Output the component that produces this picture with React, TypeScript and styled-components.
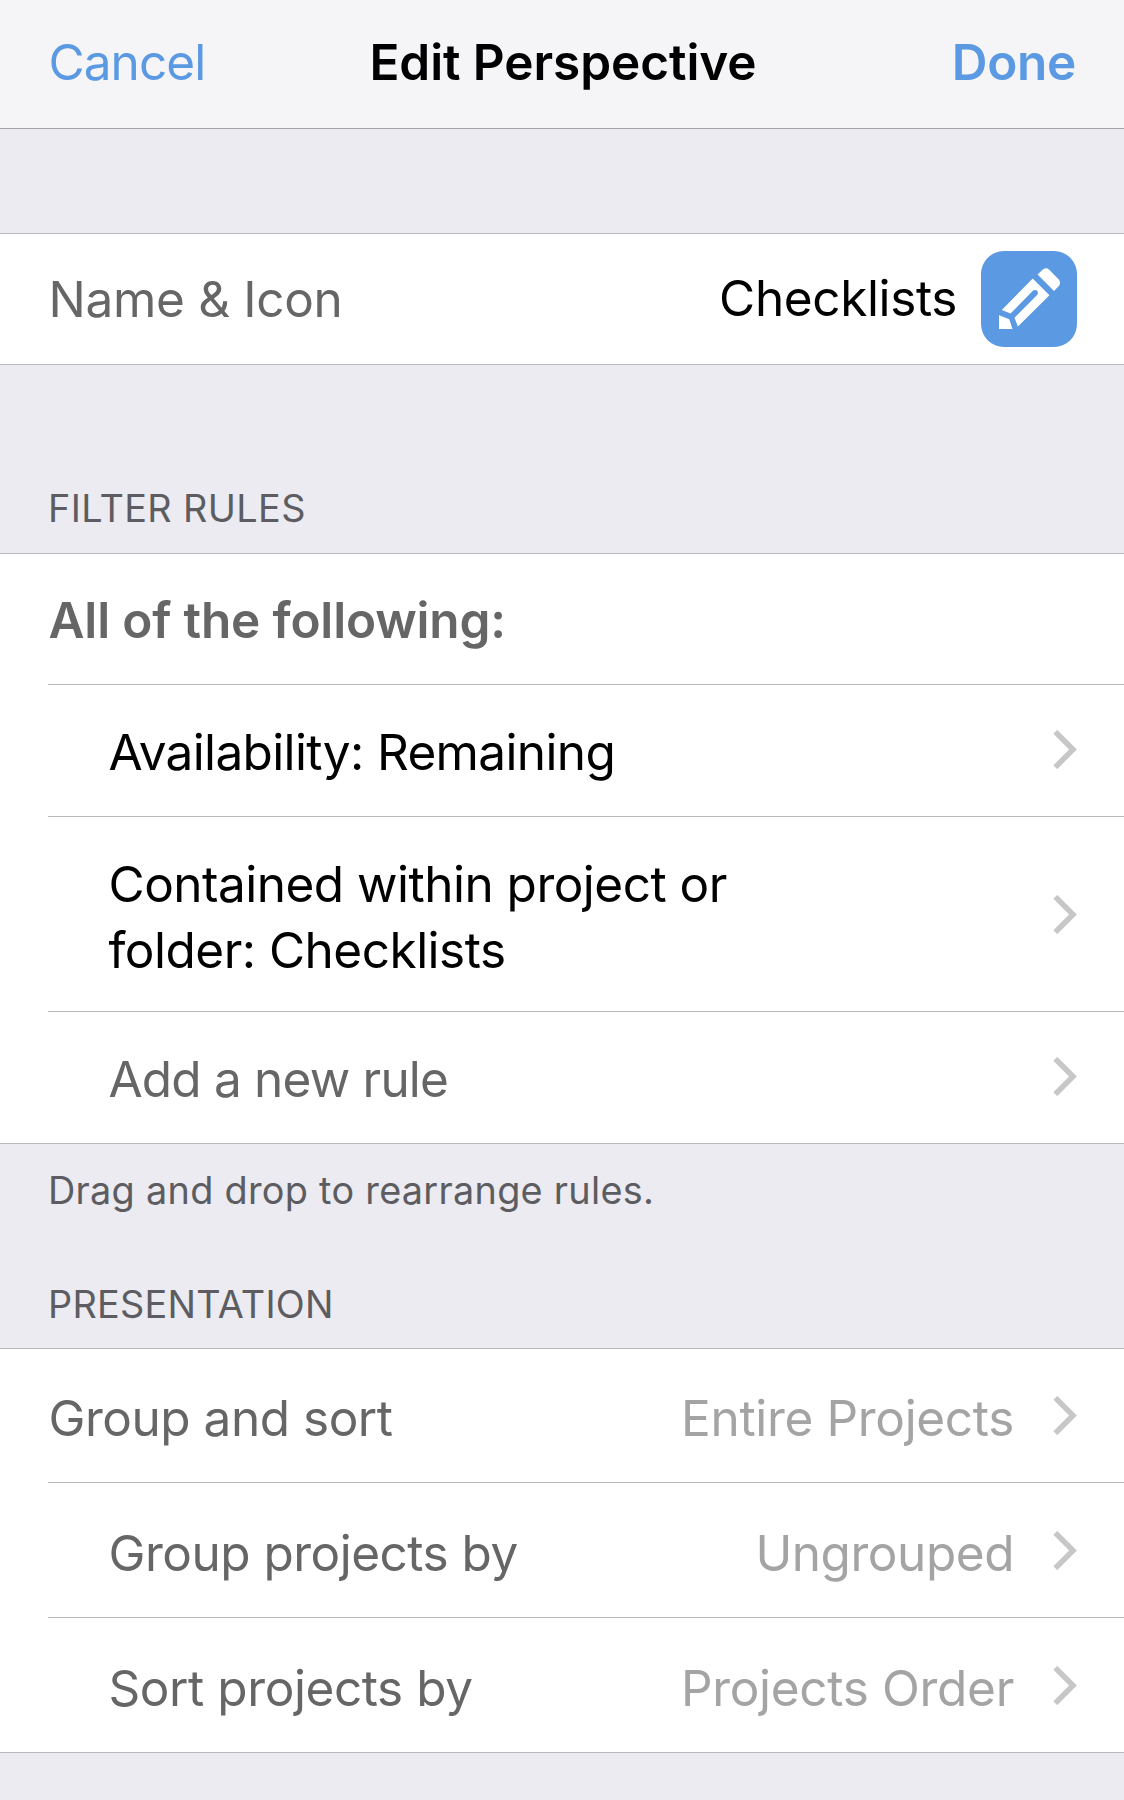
import React from "react";
import styled, { createGlobalStyle } from "styled-components";

const colors = {
  accent: "#5b99e2",
  page: "#ebebf1",
  bar: "#f5f5f8",
  barLine: "#a3a3a9",
  line: "#bbbbbf",
  label: "#666666",
  value: "#a4a4a4",
  caption: "#5c5c61",
  chevron: "#c7c7c7",
};

const GlobalStyle = createGlobalStyle`
  *, *::before, *::after { box-sizing: border-box; }
  html, body { margin: 0; background: ${colors.page}; }
  button { font: inherit; color: inherit; background: none; border: 0; padding: 0; margin: 0; cursor: pointer; }
`;

const Screen = styled.main`
  display: flex;
  flex-direction: column;
  width: 1124px;
  height: 1800px;
  overflow: hidden;
  background: ${colors.page};
  font-family: Inter, "Liberation Sans", sans-serif;
  font-size: 49.5px;
  line-height: 66px;
  color: #000;
`;

const NavBar = styled.header`
  display: grid;
  grid-template-columns: 1fr auto 1fr;
  align-items: center;
  height: 129px;
  padding: 0 48px 4px;
  background: ${colors.bar};
  border-bottom: 1px solid ${colors.barLine};
`;

const NavTitle = styled.h1`
  margin: 0;
  padding-left: 2px;
  font-size: inherit;
  font-weight: 600;
  letter-spacing: -0.07px;
  white-space: nowrap;
`;

const CancelButton = styled.button`
  && { color: ${colors.accent}; }
  justify-self: start;
  padding-left: 0.5px;
  letter-spacing: -0.92px;
`;

const DoneButton = styled.button`
  && { color: ${colors.accent}; font-weight: 600; }
  justify-self: end;
  letter-spacing: -0.3px;
`;

const Group = styled.section<{ $top?: number }>`
  display: flex;
  flex-direction: column;
  margin-top: ${(p) => p.$top ?? 0}px;
  background: #fff;
  border-top: 1px solid ${colors.line};
  border-bottom: 1px solid ${colors.line};
`;

const Row = styled.div<{ $height: number; $indent?: boolean }>`
  display: flex;
  align-items: center;
  height: ${(p) => p.$height}px;
  margin-left: 48px;
  padding-left: ${(p) => (p.$indent ? 60.5 : 0.5)}px;
  padding-right: 47px;

  & + & {
    border-top: 1px solid ${colors.line};
  }
`;

const Label = styled.span<{ $track: number; $drop?: number; $strong?: boolean; $heavy?: boolean }>`
  display: flex;
  flex-direction: column;
  margin-right: auto;
  padding-top: ${(p) => (p.$drop ?? 0) * 2}px;
  color: ${(p) => (p.$strong ? "#000" : colors.label)};
  font-weight: ${(p) => (p.$heavy ? 600 : 400)};
  letter-spacing: ${(p) => p.$track}px;
  white-space: nowrap;
`;

const Value = styled.span<{ $track: number; $drop: number }>`
  margin-right: 39px;
  padding-top: ${(p) => p.$drop * 2}px;
  color: ${colors.value};
  letter-spacing: ${(p) => p.$track}px;
  white-space: nowrap;
`;

const NameValue = styled.span`
  margin-right: 24px;
  padding-bottom: 2px;
  letter-spacing: -0.38px;
`;

const Caption = styled.div<{ $top: number; $bottom: number; $track: number }>`
  padding: ${(p) => `${p.$top}px 48px ${p.$bottom}px`};
  font-size: 37.8px;
  line-height: 46px;
  color: ${colors.caption};
  letter-spacing: ${(p) => p.$track}px;
`;

const ChevronIcon = styled.svg<{ $above: number; $below: number }>`
  display: block;
  flex: none;
  width: 24px;
  height: 39px;
  margin-top: ${(p) => p.$above}px;
  margin-bottom: ${(p) => p.$below}px;
`;

const IconTile = styled.button`
  && { background: ${colors.accent}; }
  flex: none;
  width: 96px;
  height: 96px;
  border-radius: 23px;
  overflow: hidden;

  svg { display: block; }
`;

function Chevron({ above = 0, below = 0 }: { above?: number; below?: number }) {
  return (
    <ChevronIcon $above={above} $below={below} viewBox="0 0 24 39" fill="none" aria-hidden="true">
      <path d="M2.3 1.8L20 19.5L2.3 37.2" stroke={colors.chevron} strokeWidth="5.5" />
    </ChevronIcon>
  );
}

function Pencil() {
  return (
    <svg width="96" height="96" viewBox="0 0 96 96" fill="#fff" aria-hidden="true">
      <path d="M18 64.3L28.3 68.3L31.5 78H18Z" />
      <path d="M20.8 59L51.7 27.5L68.5 44.3L36.9 75.4L33.5 66.7L56.3 43.7C58.4 40.7 55 37.5 51.9 39.8L29.6 62.6Z" />
      <path d="M56.6 23.6L61 19.2Q64.7 15.8 68 18.6L77.8 28.4Q80.4 31.9 77.6 35.2L73 39.9Z" />
    </svg>
  );
}

interface OptionProps {
  label: string;
  track: number;
  value: string;
  valueTrack: number;
  height: number;
  drop: number;
  chevronAbove?: number;
  indent?: boolean;
}

function OptionRow({ label, track, value, valueTrack, height, drop, chevronAbove, indent }: OptionProps) {
  return (
    <Row $height={height} $indent={indent}>
      <Label $track={track} $drop={drop}>{label}</Label>
      <Value $track={valueTrack} $drop={drop}>{value}</Value>
      <Chevron above={chevronAbove} />
    </Row>
  );
}

export default function App() {
  return (
    <>
      <GlobalStyle />
      <Screen>
        <NavBar>
          <CancelButton>Cancel</CancelButton>
          <NavTitle>Edit Perspective</NavTitle>
          <DoneButton>Done</DoneButton>
        </NavBar>

        <Group $top={104}>
          <Row $height={130}>
            <Label $track={-0.32}>Name &amp; Icon</Label>
            <NameValue>Checklists</NameValue>
            <IconTile aria-label="Choose icon"><Pencil /></IconTile>
          </Row>
        </Group>

        <Caption $top={120} $bottom={22} $track={0.4}>FILTER RULES</Caption>

        <Group>
          <Row $height={130}>
            <Label $track={-0.17} $drop={1} $heavy>All of the following:</Label>
          </Row>
          <Row $height={132} $indent>
            <Label $track={-0.64} $drop={1} $strong>Availability: Remaining</Label>
            <Chevron below={2} />
          </Row>
          <Row $height={195} $indent>
            <Label $track={-0.51} $drop={3} $strong>
              <span>Contained within project or</span>
              <span>folder: Checklists</span>
            </Label>
            <Chevron above={1} />
          </Row>
          <Row $height={132} $indent>
            <Label $track={-0.8} $drop={1}>Add a new rule</Label>
            <Chevron below={2} />
          </Row>
        </Group>

        <Caption $top={23} $bottom={34} $track={0.29}>Drag and drop to rearrange rules.</Caption>
        <Caption $top={34} $bottom={21} $track={0.26}>PRESENTATION</Caption>

        <Group>
          <OptionRow height={133} drop={2.5} label="Group and sort" track={-0.47} value="Entire Projects" valueTrack={-0.33} />
          <OptionRow height={135} drop={3} chevronAbove={1} indent label="Group projects by" track={-0.5} value="Ungrouped" valueTrack={-0.46} />
          <OptionRow height={135} drop={3} chevronAbove={1} indent label="Sort projects by" track={-0.42} value="Projects Order" valueTrack={-0.31} />
        </Group>
      </Screen>
    </>
  );
}
